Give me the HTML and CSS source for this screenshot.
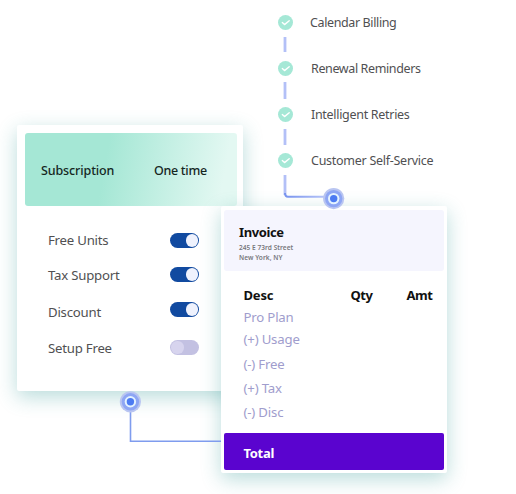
FILE: index.html
```
<!DOCTYPE html>
<html lang="en">
<head>
<meta charset="utf-8">
<title>Billing</title>
<link rel="stylesheet" href="styles.css">
</head>
<body>
<main class="scene">
  <ul class="steps">
    <li class="step"><svg class="check" viewBox="0 0 15 15"><circle cx="7.5" cy="7.5" r="7.5"/><path d="M4.3 7.6l2.2 2 4.7-3.9"/></svg><span class="s1">Calendar Billing</span></li>
    <li class="step"><svg class="check" viewBox="0 0 15 15"><circle cx="7.5" cy="7.5" r="7.5"/><path d="M4.3 7.6l2.2 2 4.7-3.9"/></svg><span class="s2">Renewal Reminders</span></li>
    <li class="step"><svg class="check" viewBox="0 0 15 15"><circle cx="7.5" cy="7.5" r="7.5"/><path d="M4.3 7.6l2.2 2 4.7-3.9"/></svg><span class="s3">Intelligent Retries</span></li>
    <li class="step"><svg class="check" viewBox="0 0 15 15"><circle cx="7.5" cy="7.5" r="7.5"/><path d="M4.3 7.6l2.2 2 4.7-3.9"/></svg><span class="s4">Customer Self-Service</span></li>
  </ul>

  <section class="card plan">
    <header class="tabs"><span class="tab-sub">Subscription</span><span class="tab-one">One time</span></header>
    <div class="options">
      <div class="option o1"><span>Free Units</span><i class="toggle on"></i></div>
      <div class="option o2"><span>Tax Support</span><i class="toggle on"></i></div>
      <div class="option o3"><span>Discount</span><i class="toggle on"></i></div>
      <div class="option o4"><span>Setup Free</span><i class="toggle"></i></div>
    </div>
  </section>

  <section class="card invoice">
    <header class="bill-to">
      <h2>Invoice</h2>
      <p class="street">245 E 73rd Street</p>
      <p class="city">New York, NY</p>
    </header>
    <div class="columns"><b class="desc">Desc</b><b class="qty">Qty</b><b class="amt">Amt</b></div>
    <ul class="lines">
      <li class="l1">Pro Plan</li>
      <li class="l2">(+) Usage</li>
      <li class="l3">(-) Free</li>
      <li class="l4">(+) Tax</li>
      <li class="l5">(-) Disc</li>
    </ul>
    <footer class="total">Total</footer>
  </section>

  <svg class="links" viewBox="0 0 516 494">
    <defs>
      <linearGradient id="fade" gradientUnits="userSpaceOnUse" x1="285" y1="0" x2="324" y2="0"><stop offset="0" stop-color="#7893ee"/><stop offset="1" stop-color="#b4c2f7"/></linearGradient>
      <g id="node"><circle r="10.6" fill="#b9c5f1"/><circle r="8.7" fill="#8ea6f4"/><circle r="5.7" fill="#e4f3ff"/><circle r="3.7" fill="#4c7bf2"/></g>
    </defs>
    <path class="dash" d="M285 37v15M285 82v17M285 129v16M285 175v20"/>
    <path d="M285 193q0 3.8 3 3.8h36" fill="none" stroke="url(#fade)" stroke-width="2"/>
    <path class="link" d="M130.5 411v30.3H221"/>
    <use href="#node" x="333.7" y="198.6"/>
    <use href="#node" x="130.4" y="401.8"/>
  </svg>
</main>
</body>
</html>
```
FILE: styles.css
```
* { box-sizing: border-box; margin: 0; padding: 0; }
body { background: #fff; font-family: "Noto Sans", "Open Sans", sans-serif; font-size: 13px; color: #505052; }
ul { list-style: none; }
.scene { position: relative; width: 516px; height: 494px; overflow: hidden; white-space: nowrap; }

.steps { position: absolute; left: 278px; top: -1px; }
.step { display: flex; align-items: center; height: 46px; font-size: 12.5px; }
.check { width: 15px; height: 15px; margin-right: 18px; fill: #a5e8d6; flex: none; }
.check path { fill: none; stroke: #fff; stroke-width: 1.4; stroke-linecap: round; stroke-linejoin: round; }
.s1 { margin-left: -1px; letter-spacing: -.38px; }
.s2 { letter-spacing: -.38px; }
.s3 { letter-spacing: -.3px; }
.s4 { letter-spacing: -.27px; }

.card { position: absolute; background: #fff; border-radius: 2px; }
.plan { left: 17px; top: 125px; width: 226px; height: 266px; padding: 7.5px 6.5px 0 7.5px; box-shadow: 0 6px 20px rgba(38, 145, 142, .32); }
.tabs { display: flex; align-items: center; height: 73.5px; padding: 3px 0 0 16.5px; border-radius: 3px; background: linear-gradient(100deg, #a5e7d5 38%, #e3f8f2 92%); color: #15271f; font-size: 12.5px; font-weight: 500; }
.tab-sub { width: 113px; letter-spacing: -.12px; }
.tab-one { letter-spacing: -.3px; }
.options { padding: 16px 0 0 23.5px; }
.option { display: flex; align-items: center; height: 36px; }
.option span { width: 122px; font-size: 13.2px; letter-spacing: -.22px; }
.o1 { height: 35px; }
.toggle { width: 29px; height: 14.5px; border-radius: 8px; background: #c3c1e2; padding: 1px; display: flex; }
.toggle::before { content: ""; width: 12.5px; height: 12.5px; border-radius: 50%; background: #d7d4ee; }
.toggle.on { background: #114aa0; justify-content: flex-end; }
.toggle.on::before { background: #eff2fd; }
.o1 .toggle { margin-top: 2px; }
.o2 .toggle { margin-bottom: 1px; }
.o3 { height: 37px; }
.o3 .toggle { margin-bottom: 4px; }
.o4 .toggle { margin-bottom: 1px; }

.invoice { left: 221px; top: 206px; width: 226px; height: 267px; padding: 4px 3.5px 0 3px; box-shadow: 0 6px 20px rgba(38, 145, 142, .32); }
.bill-to { height: 61px; padding: 13px 0 0 15px; background: #f5f5fe; border-radius: 3px; }
h2 { font-size: 13px; line-height: 19px; color: #111; letter-spacing: -.4px; }
.street, .city { font-size: 6.5px; line-height: 9.5px; font-weight: 600; color: #77777c; letter-spacing: .06px; }
.street { padding-top: 1px; height: 10.5px; }
.columns { display: flex; height: 20px; margin: 14px 0 0 19.5px; line-height: 20px; color: #111; }
.desc { width: 107px; letter-spacing: -.2px; }
.qty { width: 56px; letter-spacing: -.5px; }
.amt { letter-spacing: -.4px; }
.lines { height: 128px; padding-left: 19.5px; font-size: 13.2px; letter-spacing: -.18px; color: #a09dcd; }
.lines li { height: 24px; line-height: 24px; }
.lines .l1 { height: 22px; }
.lines .l2 { height: 24.5px; }
.total { height: 36.5px; padding-left: 19.5px; line-height: 41px; border-radius: 2px; background: #5a04cf; color: #fff; font-weight: 700; letter-spacing: -.3px; }

.links { position: absolute; inset: 0; width: 516px; height: 494px; }
.dash { stroke: #b3c0f7; stroke-width: 2.8; fill: none; }
.link { stroke: #7f9cee; stroke-width: 1.6; fill: none; }
```
